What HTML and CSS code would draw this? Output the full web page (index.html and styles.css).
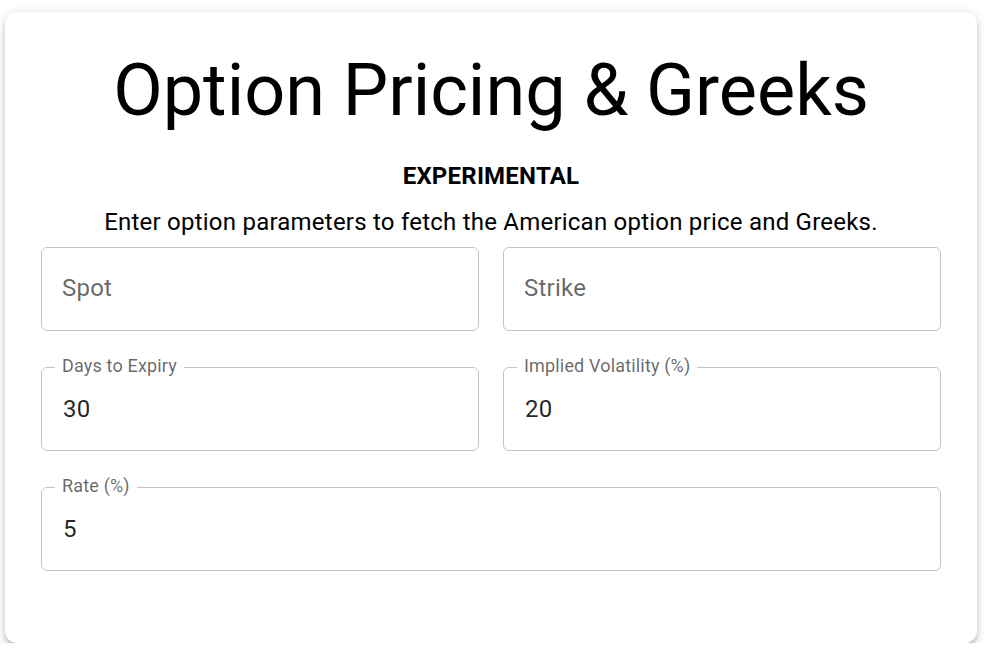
FILE: index.html
```html
<!DOCTYPE html>
<html lang="en">
<head>
<meta charset="utf-8">
<title>Option Pricing &amp; Greeks</title>
<link rel="stylesheet" href="styles.css">
</head>
<body>
<main class="page">
  <section class="card">
    <h1 class="title">Option Pricing &amp; Greeks</h1>
    <p class="tag">EXPERIMENTAL</p>
    <p class="lead">Enter option parameters to fetch the American option price and Greeks.</p>
    <form class="grid">
      <div class="field">
        <label class="label">Spot</label>
        <input class="input" type="text" value="">
      </div>
      <div class="field">
        <label class="label">Strike</label>
        <input class="input" type="text" value="">
      </div>
      <div class="field filled">
        <label class="label">Days to Expiry</label>
        <input class="input" type="text" value="30">
      </div>
      <div class="field filled">
        <label class="label">Implied Volatility (%)</label>
        <input class="input" type="text" value="20">
      </div>
      <div class="field filled wide">
        <label class="label">Rate (%)</label>
        <input class="input" type="text" value="5">
      </div>
    </form>
  </section>
</main>
</body>
</html>
```
FILE: styles.css
```css
html, body {
  margin: 0;
  padding: 0;
  background: #ffffff;
}
body {
  font-family: Roboto, "Liberation Sans", Arial, sans-serif;
  color: rgba(0, 0, 0, 0.87);
}
.page {
  padding: 12px 7px 0 5px;
}
.card {
  background: #ffffff;
  border-radius: 12px;
  padding: 36px 36px 71px;
  box-shadow: 0 4.5px 4.5px -3px rgba(0, 0, 0, 0.2),
              0 4.5px 6px 0 rgba(0, 0, 0, 0.14),
              0 1.5px 12px 0 rgba(0, 0, 0, 0.12);
  height: 631px;
  box-sizing: border-box;
}
.title {
  margin: 1px 0 0;
  font-size: 72px;
  font-weight: 400;
  line-height: 84px;
  text-align: center;
  color: #000;
}
.tag {
  margin: 22px 0 0;
  font-size: 24px;
  font-weight: 700;
  line-height: 42px;
  letter-spacing: 0.00938em;
  text-align: center;
  color: #000;
}
.lead {
  margin: 7px 0 0;
  font-size: 24px;
  line-height: 36px;
  letter-spacing: 0.00938em;
  text-align: center;
  color: #000;
}
.grid {
  margin: 7px 0 0;
  display: grid;
  grid-template-columns: 1fr 1fr;
  column-gap: 24px;
  row-gap: 36px;
}
.field {
  position: relative;
  height: 84px;
  border: 1px solid rgba(0, 0, 0, 0.23);
  border-radius: 6px;
  box-sizing: border-box;
}
.wide {
  grid-column: 1 / span 2;
}
.input {
  display: block;
  width: 100%;
  box-sizing: border-box;
  border: none;
  outline: none;
  background: transparent;
  font-family: inherit;
  font-size: 24px;
  line-height: 34.5px;
  letter-spacing: 0.00938em;
  height: 82px;
  padding: 0 21px;
  color: rgba(0, 0, 0, 0.87);
  margin: 0;
}
.label {
  position: absolute;
  left: 20px;
  top: 23px;
  font-size: 24px;
  line-height: 34.5px;
  letter-spacing: 0.00938em;
  color: rgba(0, 0, 0, 0.6);
  pointer-events: none;
}
.filled .input {
  padding-top: 0;
}
.filled .label {
  top: -15px;
  left: 13px;
  padding: 0 7px;
  font-size: 18px;
  line-height: 26px;
  background: #ffffff;
}
```
